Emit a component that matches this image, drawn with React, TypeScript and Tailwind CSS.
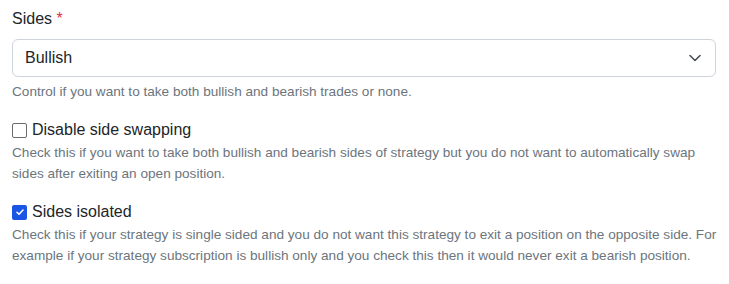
import React from "react";

const font = { fontFamily: '"Liberation Sans", Arial, sans-serif' };

export default function App() {
  return (
    <div className="bg-white w-[729px] h-[284px] px-3 pt-[7px] text-[#212529]" style={font}>
      {/* Sides select */}
      <div className="mb-4">
        <label className="block mb-2 text-base leading-6">
          Sides <span className="text-[#dc3545]">*</span>
        </label>
        <div className="relative w-[704px]">
          <select
            defaultValue="bullish"
            className="block w-full h-[38px] appearance-none rounded-md border border-[#ced4da] bg-white pl-3 pr-9 text-base text-[#212529]"
          >
            <option value="bullish">Bullish</option>
            <option value="bearish">Bearish</option>
            <option value="both">Both</option>
          </select>
          <svg
            className="pointer-events-none absolute right-[15px] top-1/2 -translate-y-1/2"
            width="12"
            height="7"
            viewBox="0 0 12 7"
            fill="none"
            stroke="#4a4f55"
            strokeWidth="1.6"
            strokeLinecap="round"
            strokeLinejoin="round"
          >
            <path d="M1 1l5 5 5-5" />
          </svg>
        </div>
        <div className="mt-1 text-[13.6px] leading-[21px] text-[#6c757d]">
          Control if you want to take both bullish and bearish trades or none.
        </div>
      </div>

      {/* Disable side swapping */}
      <div className="mb-4">
        <label className="flex items-center gap-[5px] text-base leading-6">
          <span className="block w-[15px] h-[15px] rounded-[2px] border border-[#6b6b6b] bg-white" />
          Disable side swapping
        </label>
        <div className="text-[13.6px] leading-[21px] text-[#6c757d]">
          Check this if you want to take both bullish and bearish sides of strategy but you do not want to automatically swap sides after exiting an open position.
        </div>
      </div>

      {/* Sides isolated */}
      <div>
        <label className="flex items-center gap-[5px] text-base leading-6">
          <span className="flex items-center justify-center w-[15px] h-[15px] rounded-[2px] bg-[#1a55e3]">
            <svg width="10" height="10" viewBox="0 0 20 20" fill="none" stroke="#fff" strokeWidth="3.2" strokeLinecap="round" strokeLinejoin="round">
              <path d="m4 10.5 4 4L16 6" />
            </svg>
          </span>
          Sides isolated
        </label>
        <div className="text-[13.6px] leading-[21px] text-[#6c757d]">
          Check this if your strategy is single sided and you do not want this strategy to exit a position on the opposite side. For example if your strategy subscription is bullish only and you check this then it would never exit a bearish position.
        </div>
      </div>
    </div>
  );
}
